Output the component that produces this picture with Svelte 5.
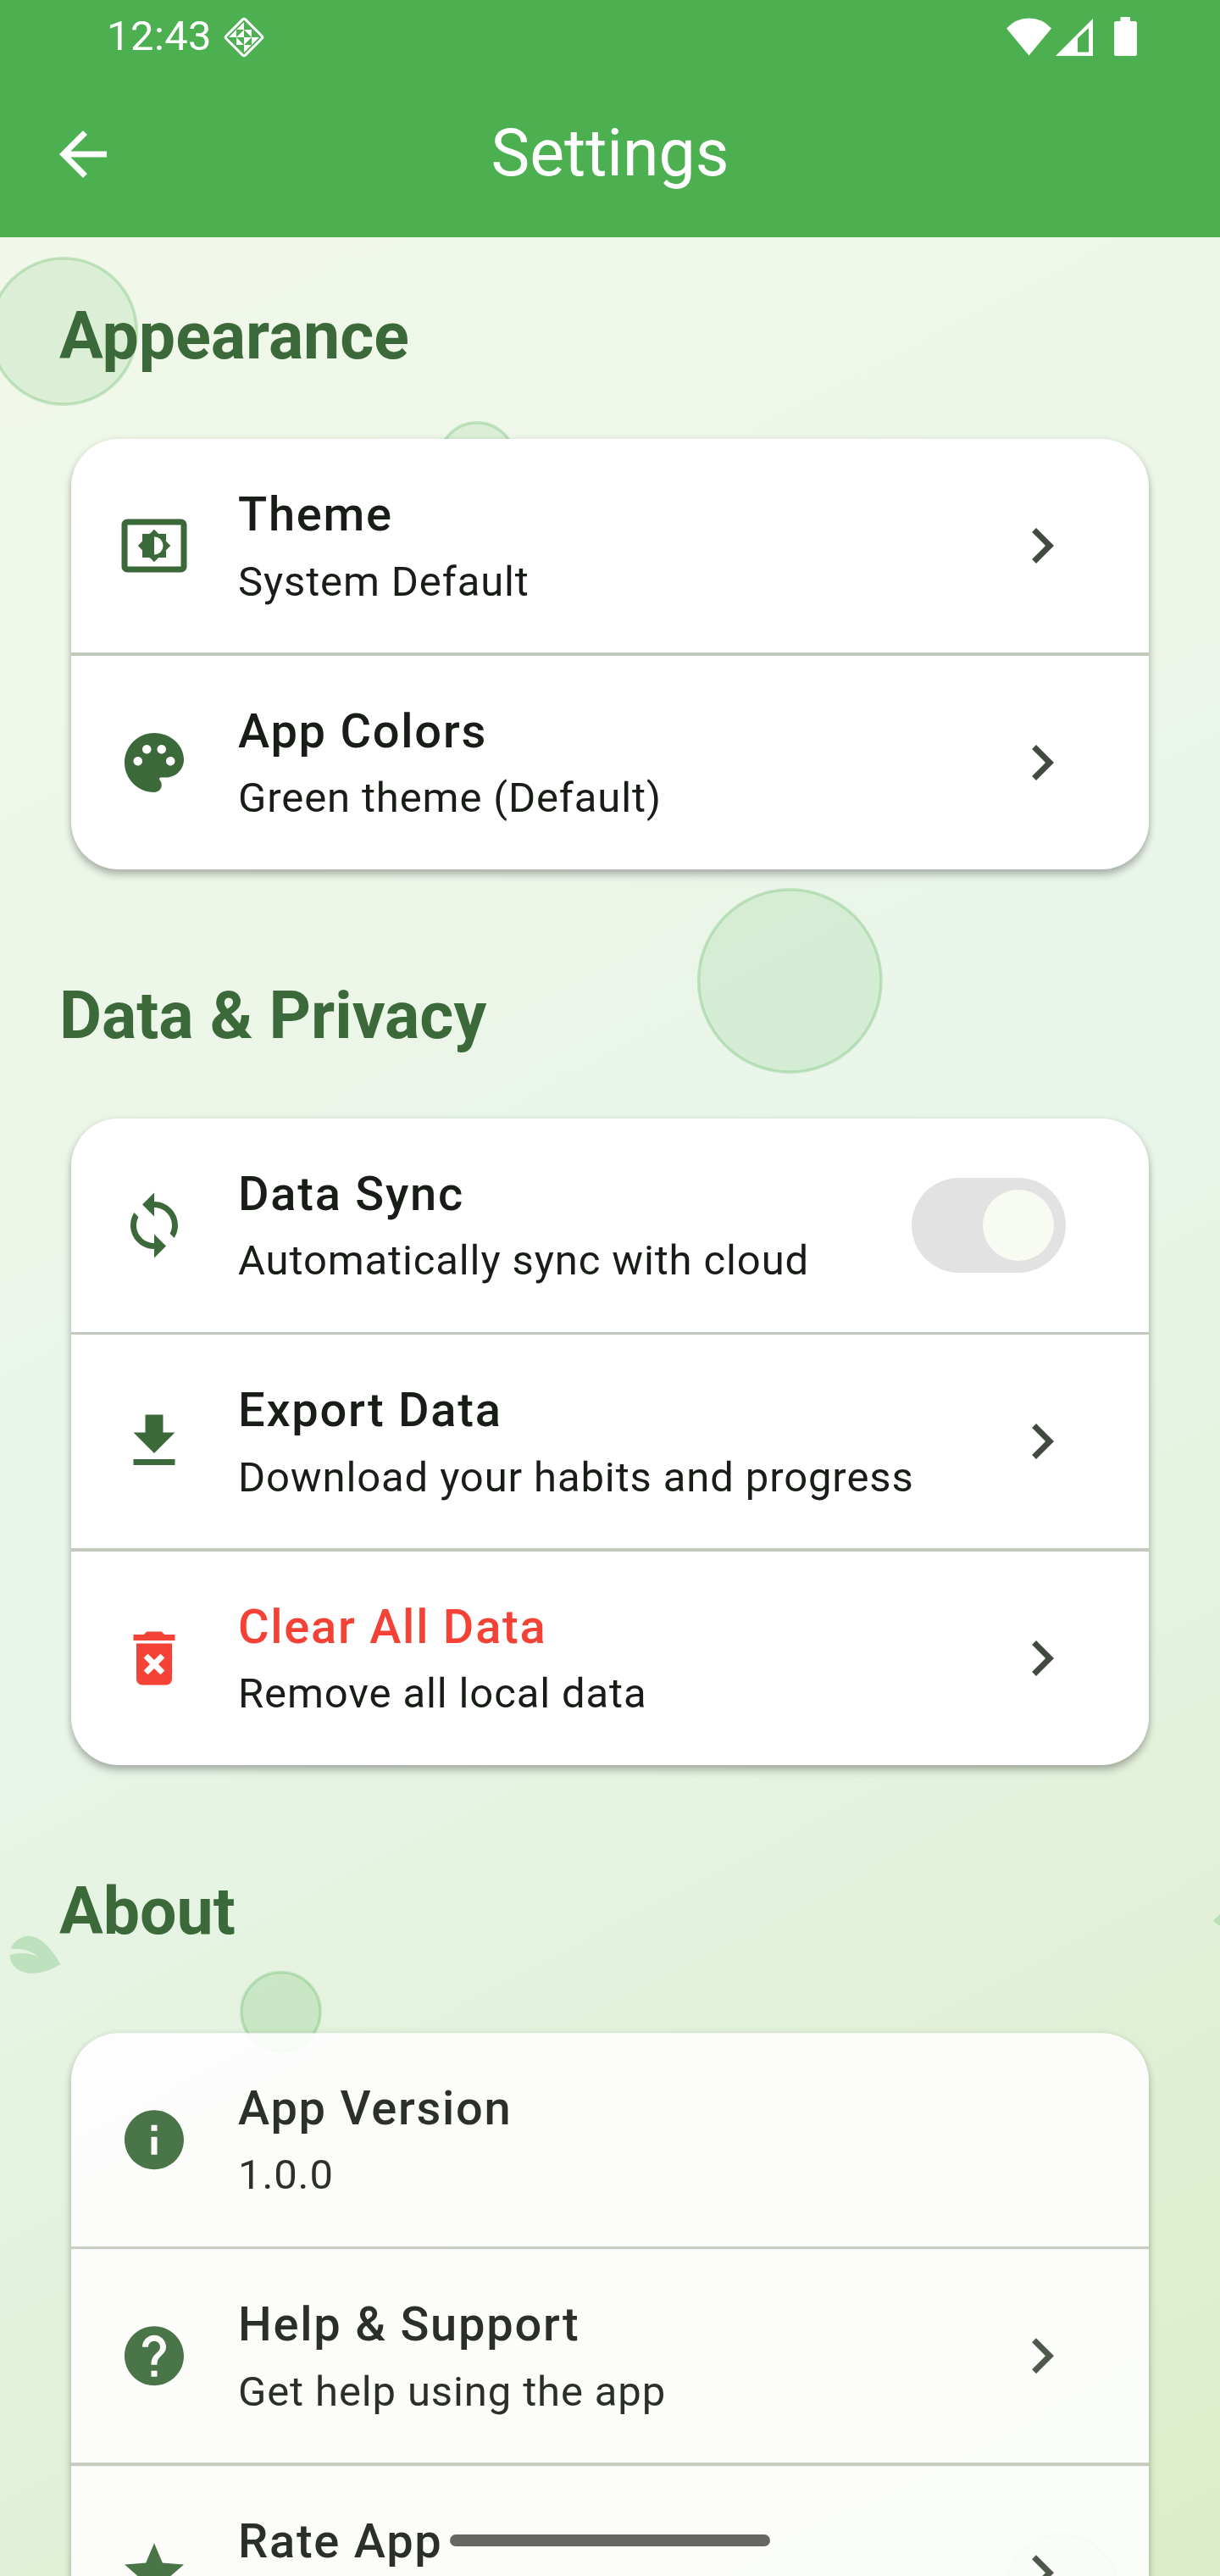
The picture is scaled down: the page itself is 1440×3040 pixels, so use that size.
<script>
  const icons = {
    brightness:
      'M21 3H3c-1.1 0-2 .9-2 2v14c0 1.1.9 2 2 2h18c1.1 0 2-.9 2-2V5c0-1.1-.9-2-2-2zm0 16.01H3V4.99h18v14.02zM8 16h2.5l1.5 1.5 1.5-1.5H16v-2.5l1.5-1.5-1.5-1.5V8h-2.5L12 6.5 10.5 8H8v2.5L6.5 12 8 13.5V16zm4-7c1.66 0 3 1.34 3 3s-1.34 3-3 3V9z',
    palette:
      'M12 2C6.49 2 2 6.49 2 12s4.49 10 10 10c1.38 0 2.5-1.12 2.5-2.5 0-.61-.23-1.2-.64-1.67-.08-.1-.13-.21-.13-.33 0-.28.22-.5.5-.5H16c3.31 0 6-2.69 6-6C22 6.04 17.51 2 12 2zm5.5 11c-.83 0-1.5-.67-1.5-1.5s.67-1.5 1.5-1.5 1.5.67 1.5 1.5-.67 1.5-1.5 1.5zm-3-4c-.83 0-1.5-.67-1.5-1.5S13.67 6 14.5 6s1.5.67 1.5 1.5S15.33 9 14.5 9zM5 11.5c0-.83.67-1.5 1.5-1.5s1.5.67 1.5 1.5S7.33 13 6.5 13 5 12.33 5 11.5zm6-4c0 .83-.67 1.5-1.5 1.5S8 8.33 8 7.5 8.67 6 9.5 6s1.5.67 1.5 1.5z',
    sync:
      'M12 4V1L8 5l4 4V6c3.31 0 6 2.69 6 6 0 1.01-.25 1.97-.7 2.8l1.46 1.46C19.54 15.03 20 13.57 20 12c0-4.42-3.58-8-8-8zm0 14c-3.31 0-6-2.69-6-6 0-1.01.25-1.97.7-2.8L5.24 7.74C4.46 8.97 4 10.43 4 12c0 4.42 3.58 8 8 8v3l4-4-4-4v3z',
    download: 'M19 9h-4V3H9v6H5l7 7 7-7zM5 18v2h14v-2H5z',
    trash:
      'M6 19c0 1.1.9 2 2 2h8c1.1 0 2-.9 2-2V7H6v12zm2.46-7.12l1.41-1.41L12 12.59l2.12-2.12 1.41 1.41L13.41 14l2.12 2.12-1.41 1.41L12 15.41l-2.12 2.12-1.41-1.41L10.59 14l-2.13-2.12zM15.5 4l-1-1h-5l-1 1H5v2h14V4z',
    info: 'M12 2C6.48 2 2 6.48 2 12s4.48 10 10 10 10-4.48 10-10S17.52 2 12 2zm1 15h-2v-6h2v6zm0-8h-2V7h2v2z',
    help:
      'M12 2C6.48 2 2 6.48 2 12s4.48 10 10 10 10-4.48 10-10S17.52 2 12 2zm1 17h-2v-2h2v2zm2.07-7.75l-.9.92C13.45 12.9 13 13.5 13 15h-2v-.5c0-1.1.45-2.1 1.17-2.83l1.24-1.26c.37-.36.59-.86.59-1.41 0-1.1-.9-2-2-2s-2 .9-2 2H8c0-2.21 1.79-4 4-4s4 1.79 4 4c0 .88-.36 1.68-.93 2.25z',
    star: 'M12 17.27L18.18 21l-1.64-7.03L22 9.24l-7.19-.61L12 2 9.19 8.63 2 9.24l5.46 4.73L5.82 21z',
    chevron: 'M10 6L8.59 7.41 13.17 12l-4.58 4.59L10 18l6-6z',
    back: 'M20 11H7.83l5.59-5.59L12 4l-8 8 8 8 1.41-1.41L7.83 13H20v-2z'
  };

  const sections = [
    {
      title: 'Appearance',
      rows: [
        { icon: 'brightness', title: 'Theme', sub: 'System Default', end: 'chevron' },
        { icon: 'palette', title: 'App Colors', sub: 'Green theme (Default)', end: 'chevron' }
      ]
    },
    {
      title: 'Data & Privacy',
      rows: [
        { icon: 'sync', title: 'Data Sync', sub: 'Automatically sync with cloud', end: 'switch' },
        { icon: 'download', title: 'Export Data', sub: 'Download your habits and progress', end: 'chevron' },
        { icon: 'trash', title: 'Clear All Data', sub: 'Remove all local data', end: 'chevron', danger: true }
      ]
    },
    {
      title: 'About',
      entering: true,
      rows: [
        { icon: 'info', title: 'App Version', sub: '1.0.0', end: null },
        { icon: 'help', title: 'Help & Support', sub: 'Get help using the app', end: 'chevron' },
        { icon: 'star', title: 'Rate App', sub: '', end: 'chevron' }
      ]
    }
  ];

  // Floating decoration, in the coordinates of the scroll area
  const bubbles = [
    { x: 75, y: 111, r: 86.25, o: 0.12 },
    { x: 563, y: 263.7, r: 45, o: 0.12 },
    { x: 932.3, y: 877.5, r: 107.75, o: 0.13 },
    { x: 331.5, y: 2094, r: 46.6, o: 0.18 },
    { x: 1253.5, y: 2778, r: 66.7, o: 0.14 }
  ];
</script>

{#snippet glyph(name)}
  <svg class="icon" viewBox="0 0 24 24"><path d={icons[name]} fill-rule="evenodd" /></svg>
{/snippet}

<div class="screen">
  <header>
    <div class="status">
      <span class="clock">12:43</span>
      <svg class="badge" viewBox="-25 -25 50 50">
        <rect x="-16" y="-16" width="32" height="32" rx="2.5" transform="rotate(45)" fill="none" stroke="#fff" stroke-width="3" />
        <path fill="#fff" d="M0-18V-9H-9ZM-18 0L-9-9V0ZM0-9H9V0ZM0-9V0H-9ZM-9 0V9H0ZM0 0H9L0 9ZM9 0H18L9 9ZM0 9H9L0 18Z" />
      </svg>
      <svg class="signals" viewBox="0 0 156 50" fill="#fff">
        <path d="M0 14.5Q11 2.5 26.5 2.5T53 14.5L26.5 46.5Z" />
        <path fill-rule="evenodd" d="M58 47L102 3V47ZM84 26V42.5H97V14Z" />
        <path d="M134.5 1H146V6H151.5Q154 6 154 8.5V44.5Q154 47 151.5 47H129.5Q127 47 127 44.5V8.5Q127 6 129.5 6H134.5Z" />
      </svg>
    </div>
    <div class="toolbar">
      <span class="side">{@render glyph('back')}</span>
      <h1>Settings</h1>
      <span class="side"></span>
    </div>
  </header>

  <main>
    <svg class="decor" viewBox="0 0 1440 2760">
      {#each bubbles as b}
        <circle cx={b.x} cy={b.y} r={b.r} fill="#4caf50" fill-opacity={b.o} stroke="#4caf50" stroke-opacity="0.27" stroke-width="3.5" />
      {/each}
      <g fill="#4caf50" fill-opacity="0.26">
        <path d="M12.4 2020C17 2010 25 2004.5 34.5 2004.7C48 2005 62 2021 71.6 2038.3C58 2046 45 2050 32 2048.5C19 2046 11.5 2037 11.5 2027.3C23 2023.5 35 2025 45 2029.3C37 2022 25 2019 12.4 2020Z" />
        <path d="M1431.7 1987L1440 1979V1993Z" />
      </g>
    </svg>

    {#each sections as section}
      <section>
        <h2>{section.title}</h2>
        <div class="card" class:entering={section.entering}>
          {#each section.rows as row, i}
            {#if i > 0}<div class="divider"></div>{/if}
            <div class="row" class:danger={row.danger}>
              <span class="lead">{@render glyph(row.icon)}</span>
              <div class="text">
                <div class="title">{row.title}</div>
                <div class="sub">{row.sub}</div>
              </div>
              {#if row.end === 'chevron'}
                <span class="chev">{@render glyph('chevron')}</span>
              {:else if row.end === 'switch'}
                <span class="switch"><i></i></span>
              {/if}
            </div>
          {/each}
        </div>
      </section>
    {/each}
  </main>

  <div class="home"></div>
</div>

<style>
  :global(body) {
    margin: 0;
  }
  .screen {
    position: relative;
    width: 1440px;
    height: 3040px;
    overflow: hidden;
    display: flex;
    flex-direction: column;
    font-family: Roboto, 'Liberation Sans', sans-serif;
  }
  .icon {
    display: block;
    width: 84px;
    height: 84px;
    fill: currentColor;
  }
  header {
    flex: none;
    height: 280px;
    background: #4caf50;
    color: #fff;
  }
  .status {
    height: 84px;
    box-sizing: border-box;
    padding: 19px 96px 0 126px;
    display: flex;
    align-items: flex-start;
  }
  .clock {
    width: 122px;
    font-size: 49px;
    line-height: 48px;
    letter-spacing: 0.4px;
    white-space: nowrap;
  }
  .badge {
    width: 50px;
    height: 50px;
    margin-left: 15px;
  }
  .signals {
    width: 156px;
    height: 50px;
    margin-left: auto;
  }
  .toolbar {
    height: 196px;
    box-sizing: border-box;
    padding: 0 56px;
    display: flex;
    align-items: center;
    justify-content: space-between;
  }
  .side {
    width: 84px;
  }
  h1 {
    margin: 0;
    padding-bottom: 2px;
    font-size: 77px;
    line-height: 98px;
    font-weight: 400;
  }
  main {
    position: relative;
    flex: none;
    height: 2760px;
    overflow: hidden;
    background: linear-gradient(152.45deg, #f1f8e9 0%, #e8f5e9 50%, #dcedc8 100%);
  }
  .decor {
    position: absolute;
    inset: 0;
    width: 1440px;
    height: 2760px;
  }
  section {
    position: relative;
    padding: 68px 84px 58px;
  }
  h2 {
    margin: 0 -14px 72px;
    font-size: 77px;
    line-height: 98px;
    font-weight: 700;
    color: #3b6939;
  }
  section + section {
    padding-top: 66px;
  }
  .card {
    border-radius: 56px;
    background: #fff;
    box-shadow:
      0 7px 10px rgba(0, 0, 0, 0.2),
      0 2px 8px rgba(0, 0, 0, 0.14);
  }
  .entering {
    opacity: 0.907;
    transform: translateY(22.2px);
  }
  .divider {
    height: 3.5px;
    background: #c2c9bd;
  }
  .row {
    height: 252px;
    box-sizing: border-box;
    padding: 0 84px 0 56px;
    display: flex;
    align-items: center;
    color: #181d17;
  }
  .lead {
    color: #3b6939;
    margin-right: 57px;
  }
  .text {
    flex: 1;
    padding-top: 1.4px;
  }
  .title {
    font-size: 56px;
    line-height: 80px;
    font-weight: 500;
    letter-spacing: 1.75px;
    margin-bottom: 4.5px;
  }
  .sub {
    height: 70px;
    font-size: 49px;
    line-height: 70px;
    letter-spacing: 0.875px;
  }
  .danger .lead,
  .danger .title {
    color: #f44336;
  }
  .chev {
    color: #424940;
  }
  .switch {
    width: 182px;
    height: 112px;
    box-sizing: border-box;
    padding-right: 14px;
    margin-right: 14px;
    border-radius: 56px;
    background: #e2e2e2;
    display: flex;
    align-items: center;
    justify-content: flex-end;
  }
  .switch i {
    width: 84px;
    height: 84px;
    border-radius: 50%;
    background: #f7fbf1;
  }
  .home {
    position: absolute;
    left: 531px;
    top: 2991px;
    width: 378px;
    height: 14px;
    border-radius: 7px;
    background: #666664;
  }
</style>
